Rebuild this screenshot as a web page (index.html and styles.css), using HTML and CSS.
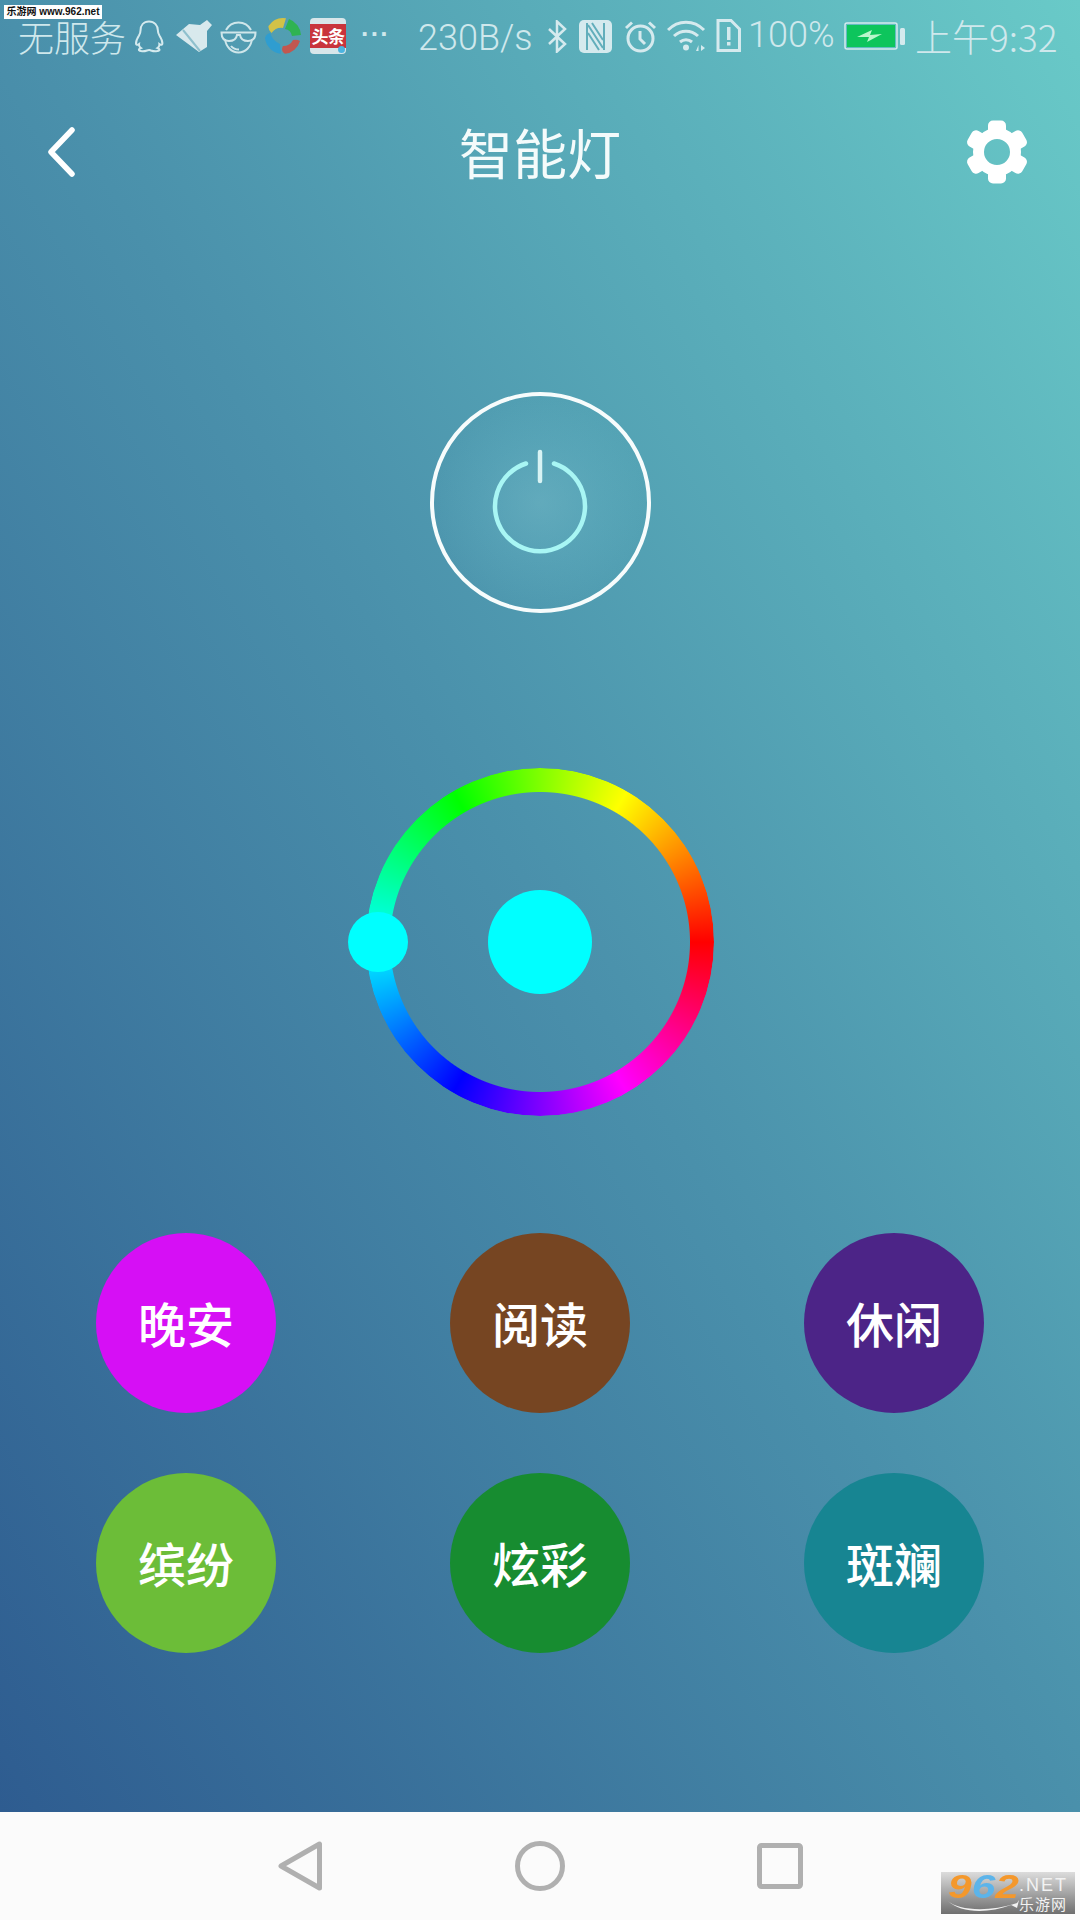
FILE: index.html
```html
<!DOCTYPE html>
<html>
<head>
	<meta charset="utf-8">
	<title>智能灯</title>
	<link rel="stylesheet" href="styles.css">
</head>
<body>
<div class="screen">
	<div class="app">
		<!-- 状态栏 -->
		<div class="status">
			<div class="status-group">
				<span class="carrier">无服务</span>
				<svg class="ic-qq" viewBox="0 0 30 33"><path d="M15 1.500c-5.500 0-8.500 4-8.500 9 0 2-.3 3-1.500 5-1.600 2.500-3 5.500-3 8 0 1.500 1 1.800 3 .5-.2 1.500.5 3 2 4-1.500.6-2.500 1.300-2 2.300.6 1.200 5 1.400 8 .2 1.300-.5 3-.5 4 0 3 1.200 7.800 1 8.400-.2.500-1-.5-1.700-2-2.300 1.500-1 2.200-2.500 2-4 2 1.300 3 1 3-.5 0-2.500-1.400-5.500-3-8-1.200-2-1.500-3-1.500-5 0-5-3.400-9-8.900-9z" fill="none" stroke="#d5eaee" stroke-width="2"/></svg>
				<svg class="ic-broom" viewBox="0 0 36 33"><path d="M0 15 13 4l11 1 7-5 5 5-5 6v16l-8 5z" fill="#d8e9ed"/><path d="M7 10l17 21" fill="none" stroke="#8fc0cd" stroke-width="2"/></svg>
				<svg class="ic-face" viewBox="0 0 37 33" fill="none" stroke="#cfe6ea" stroke-width="2"><path d="M6 9C9 3.500 13 1.500 18.500 1.500S28 3.500 31 9"/><path d="M5 18c1 8 6.500 13.500 13.500 13.500S31 26 32 18"/><path d="M1.500 11.500h34c0 5-2.500 8.500-7.500 8.500-5 0-7.500-3-8-6h-3c-.5 3-3 6-8 6-5 0-7.500-3.500-7.500-8.500z"/><path d="M11 25c2 2.500 5 3.500 8 3.500"/></svg>
				<svg class="ic-game" viewBox="0 0 36 36"><path d="M3.500 8A18 18 0 0 1 21 .3L18 10Q11 9 6.500 15Q3 12 3.500 8z" fill="#d2c247"/><path d="M24 1A18 18 0 0 1 36 17L27 18Q26 12 20 11z" fill="#2fb352"/><path d="M35 23A18 18 0 0 1 20 35.800Q15 33 18 28Q25 28 28 22Q32 21 35 23z" fill="#c2574f"/><path d="M0 20A18 18 0 0 0 16 35.800L15 26Q8 23 5 15Q1 16 0 20z" fill="#2f9dd0"/></svg>
				<div class="ic-news"><span class="news-band">头条</span><i class="news-dot"></i></div>
				<span class="dots">···</span>
			</div>
			<div class="status-group">
				<span class="speed">230B/s</span>
				<svg class="ic-bt" viewBox="0 0 20 33" fill="none" stroke="#d5eaee" stroke-width="2.500"><path d="M2 9l16 15-8 7.500V1.500L18 9 2 24"/></svg>
				<svg class="ic-nfc" viewBox="0 0 33 33"><rect width="33" height="33" rx="5" fill="#d5eaee"/><path d="M8 3v27M25 3v27M9 5l15 23M13 3l11 17M20 30 9 13" fill="none" stroke="#62aebb" stroke-width="2"/></svg>
				<svg class="ic-alarm" viewBox="0 0 33 33" fill="none" stroke="#d5eaee" stroke-width="3"><circle cx="16.500" cy="18.500" r="12.500"/><path d="M16 11v8l5 5M2 8l6-5.500M31 8l-6-5.500"/></svg>
				<svg class="ic-wifi" viewBox="0 0 40 33" fill="none" stroke="#d5eaee" stroke-width="3"><path d="M1 11C11 .5 27 .5 37 11M7 17c7-6.500 17-6.500 24 0M13 23c3.500-3 8.500-3 12 0"/><circle cx="19" cy="28.500" r="3" fill="#d5eaee" stroke="none"/><path d="M29 32l2.500-6v6zM34 26v6l4-3z" fill="#d5eaee" stroke="none"/></svg>
				<svg class="ic-sim" viewBox="0 0 25 33"><path d="M2 1.500h13l8.500 8.500v21.500H2z" fill="none" stroke="#d5eaee" stroke-width="3"/><rect x="11" y="8" width="3.500" height="13" fill="#d5eaee"/><rect x="11" y="23" width="3.500" height="3.500" fill="#d5eaee"/></svg>
				<span class="percent">100%</span>
				<svg class="ic-battery" viewBox="0 0 61 28"><rect x="1" y="1" width="52" height="26" rx="2" fill="none" stroke="#d5eaee" stroke-width="1.500"/><rect x="3" y="3" width="48" height="22" fill="#0dc55c"/><rect x="56" y="6" width="5" height="17" rx="1.500" fill="#d5eaee"/><path d="M13 15 28 8l-2 5 12-1-15 8 2-5z" fill="#b9f7cc"/></svg>
				<span class="clock">上午9:32</span>
			</div>
		</div>

		<!-- 标题栏 -->
		<div class="topbar">
			<svg class="back" viewBox="0 0 30 50"><path d="M26 3 5 25l21 22" fill="none" stroke="#fff" stroke-width="5.500" stroke-linecap="round" stroke-linejoin="round"/></svg>
			<h1 class="title">智能灯</h1>
			<svg class="gear" viewBox="-32 -32 64 64" fill="#fff">
				<circle r="18.500" fill="none" stroke="#fff" stroke-width="11"/>
				<rect x="-9" y="-31.500" width="18" height="14" rx="5"/>
				<rect x="-9" y="-31.500" width="18" height="14" rx="5" transform="rotate(60)"/>
				<rect x="-9" y="-31.500" width="18" height="14" rx="5" transform="rotate(120)"/>
				<rect x="-9" y="-31.500" width="18" height="14" rx="5" transform="rotate(180)"/>
				<rect x="-9" y="-31.500" width="18" height="14" rx="5" transform="rotate(240)"/>
				<rect x="-9" y="-31.500" width="18" height="14" rx="5" transform="rotate(300)"/>
			</svg>
		</div>

		<!-- 开关 -->
		<div class="power">
			<svg class="power-icon" viewBox="0 0 100 110" fill="none" stroke="#a8f6f4" stroke-width="4.500" stroke-linecap="round">
				<path d="M36 14.500A45 45 0 1 0 64 14.500"/>
				<path d="M50 3v29" stroke="#d8f3f4"/>
			</svg>
		</div>

		<!-- 调色环 -->
		<div class="wheel">
			<div class="wheel-ring"></div>
			<div class="wheel-color"></div>
			<div class="wheel-thumb"></div>
		</div>

		<!-- 场景 -->
		<div class="scenes">
			<div class="scene scene-night">晚安</div>
			<div class="scene scene-read">阅读</div>
			<div class="scene scene-relax">休闲</div>
			<div class="scene scene-bright">缤纷</div>
			<div class="scene scene-dazzle">炫彩</div>
			<div class="scene scene-gorgeous">斑斓</div>
		</div>
	</div>

	<!-- 导航栏 -->
	<div class="navbar">
		<svg viewBox="0 0 50 50" fill="none" stroke="#b0b0b0" stroke-width="5" stroke-linejoin="round"><path d="M44.500 3v44L6 25z"/></svg>
		<svg viewBox="0 0 50 50" fill="none" stroke="#b0b0b0" stroke-width="5"><circle cx="25" cy="25" r="22.500"/></svg>
		<svg viewBox="0 0 50 50" fill="none" stroke="#b0b0b0" stroke-width="5" stroke-linejoin="round"><rect x="4.500" y="4.500" width="41" height="41" rx="2"/></svg>
	</div>

	<div class="mark-top">乐游网 www.962.net</div>
	<div class="mark-logo">
		<div class="logo-left">
			<div class="logo-num"><span class="logo-orange">9</span><span class="logo-blue">6</span><span class="logo-orange">2</span></div>
			<svg class="logo-swoosh" viewBox="0 0 72 12"><path d="M0 1c10 9 40 12 70 2l2-3-2 8-6-3C40 14 12 13 0 1z" fill="#f2f2f2"/></svg>
		</div>
		<div class="logo-side">
			<span class="logo-net">.NET</span>
			<span class="logo-cn">乐游网</span>
		</div>
	</div>
</div>
</body>
</html>
```

FILE: styles.css
```css
html,body{margin:0;padding:0;}
body{font-family:"Noto Sans CJK SC","Noto Sans",sans-serif;}
.screen{position:relative;width:1080px;height:1920px;overflow:hidden;display:flex;flex-direction:column;}
.app{height:1812px;display:flex;flex-direction:column;background:linear-gradient(to top right,#2e5c90 0%,#4a90ab 50%,#69cac8 100%);}

/* status */
.status{height:72px;box-sizing:border-box;padding:18px 27px 0 18px;display:flex;justify-content:space-between;align-items:flex-start;color:#cfe8ec;}
.status-group{display:flex;align-items:flex-start;gap:10px;}
.status svg{display:block;flex:none;}
.carrier{font-size:36px;line-height:33px;margin-top:2px;width:106px;white-space:nowrap;font-weight:300;}
.ic-qq{width:30px;height:33px;margin-top:2px;}
.ic-broom{width:36px;height:33px;margin-top:2px;margin-left:2px;}
.ic-face{width:37px;height:33px;margin-top:3px;margin-left:-2px;}
.ic-game{width:36px;height:36px;margin-left:-2px;}
.ic-news{position:relative;width:36px;height:36px;border-radius:4px;background:#d8e6ea;display:flex;align-items:center;margin-left:-1px;}
.news-band{display:block;width:100%;height:24px;background:#c9343c;color:#fff;font-size:17px;line-height:24px;font-weight:700;text-align:center;white-space:nowrap;letter-spacing:-.5px;}
.news-dot{position:absolute;right:1px;bottom:1px;width:7px;height:7px;border-radius:50%;background:#4cb4e0;}
.dots{font-family:"Liberation Sans",sans-serif;font-size:26px;font-weight:700;line-height:32px;width:26px;margin-left:5px;letter-spacing:1px;white-space:nowrap;}
.speed{font-family:Roboto,sans-serif;font-weight:300;font-size:36px;line-height:36px;width:115px;margin-left:23px;white-space:nowrap;margin-top:2px;}
.ic-bt{width:20px;height:33px;margin-top:2px;margin-left:4px;}
.ic-nfc{width:33px;height:33px;margin-top:2px;margin-left:2px;}
.ic-alarm{width:33px;height:33px;margin-top:2px;margin-left:2px;}
.ic-wifi{width:40px;height:33px;margin-top:1px;}
.ic-sim{width:25px;height:33px;margin-top:1px;margin-left:-1px;}
.percent{font-family:Roboto,sans-serif;font-weight:300;font-size:36px;line-height:34px;width:81px;white-space:nowrap;margin-left:-3px;margin-right:5px;}
.ic-battery{width:61px;height:28px;margin-top:4px;}
.clock{font-size:37px;line-height:36px;width:138px;white-space:nowrap;font-weight:300;}

/* title */
.topbar{height:100px;margin-top:30px;padding:0 51px 0 46px;display:flex;align-items:center;justify-content:space-between;position:relative;}
.back{width:30px;height:50px;display:block;}
.gear{width:64px;height:64px;display:block;}
.title{position:absolute;left:0;right:0;top:0;margin:0;text-align:center;color:#f4fbfb;font-size:54px;line-height:100px;font-weight:400;}

/* power */
.power{box-sizing:border-box;width:221px;height:221px;margin:190px auto 0;border:4px solid #f7fcfc;border-radius:50%;display:flex;align-items:center;justify-content:center;background:radial-gradient(circle,rgba(140,205,215,.28) 0,rgba(120,195,210,.14) 40%,rgba(120,195,210,0) 70%);}
.power-icon{width:100px;height:110px;display:block;margin-top:3px;}

/* wheel */
.wheel{position:relative;width:350px;height:348px;margin:155px auto 0;display:flex;align-items:center;justify-content:center;}
.wheel-ring{position:absolute;left:1px;top:0;width:348px;height:348px;border-radius:50%;background:conic-gradient(from 90deg,#f00 0deg,#f0f 60deg,#00f 120deg,#0ff 180deg,#0f0 240deg,#ff0 300deg,#f00 360deg);-webkit-mask:radial-gradient(circle,transparent 149.500px,#000 150.500px);mask:radial-gradient(circle,transparent 149.500px,#000 150.500px);}
.wheel-color{width:104px;height:104px;border-radius:50%;background:#0ff;}
.wheel-thumb{position:absolute;left:-17px;top:144px;width:60px;height:60px;border-radius:50%;background:#0ff;}

/* scenes */
.scenes{margin-top:117px;padding:0 96px;display:grid;grid-template-columns:180px 180px 180px;justify-content:space-between;row-gap:60px;}
.scene{height:180px;box-sizing:border-box;padding-bottom:3px;border-radius:50%;display:flex;align-items:center;justify-content:center;color:#fff;font-size:48px;font-weight:500;}
.scene-night{background:#d60ff5;}
.scene-read{background:#764522;}
.scene-relax{background:#4c2487;}
.scene-bright{background:#6cbd38;}
.scene-dazzle{background:#178c30;}
.scene-gorgeous{background:#178592;}

/* nav */
.navbar{flex:1;background:#fbfbfb;display:flex;align-items:center;justify-content:center;gap:190px;}
.navbar svg{width:50px;height:50px;display:block;}

/* watermarks */
.mark-top{position:absolute;left:4px;top:5px;width:98px;height:14px;background:#fff;color:#111;font-family:"Liberation Sans","Noto Sans CJK SC",sans-serif;font-size:10px;font-weight:700;line-height:14px;text-align:center;white-space:nowrap;}
.mark-logo{position:absolute;left:941px;top:1872px;width:134px;height:42px;background:linear-gradient(#dcdcdc,#6e6e6e);display:flex;}
.logo-left{width:78px;padding-left:7px;box-sizing:border-box;flex:none;}
.logo-num{font-family:"Liberation Sans",sans-serif;font-style:italic;font-weight:700;font-size:34px;line-height:28px;width:57px;white-space:nowrap;transform:scaleX(1.25);transform-origin:left center;}
.logo-swoosh{display:block;width:71px;height:12px;}
.logo-orange{color:#f4982c;}
.logo-blue{color:#5cb4ea;}
.logo-side{display:flex;flex-direction:column;color:#f2f2f2;white-space:nowrap;padding-top:4px;}
.logo-net{font-family:"Liberation Sans",sans-serif;font-size:18px;line-height:18px;letter-spacing:2px;}
.logo-cn{font-size:15px;line-height:20px;letter-spacing:1px;}
```
